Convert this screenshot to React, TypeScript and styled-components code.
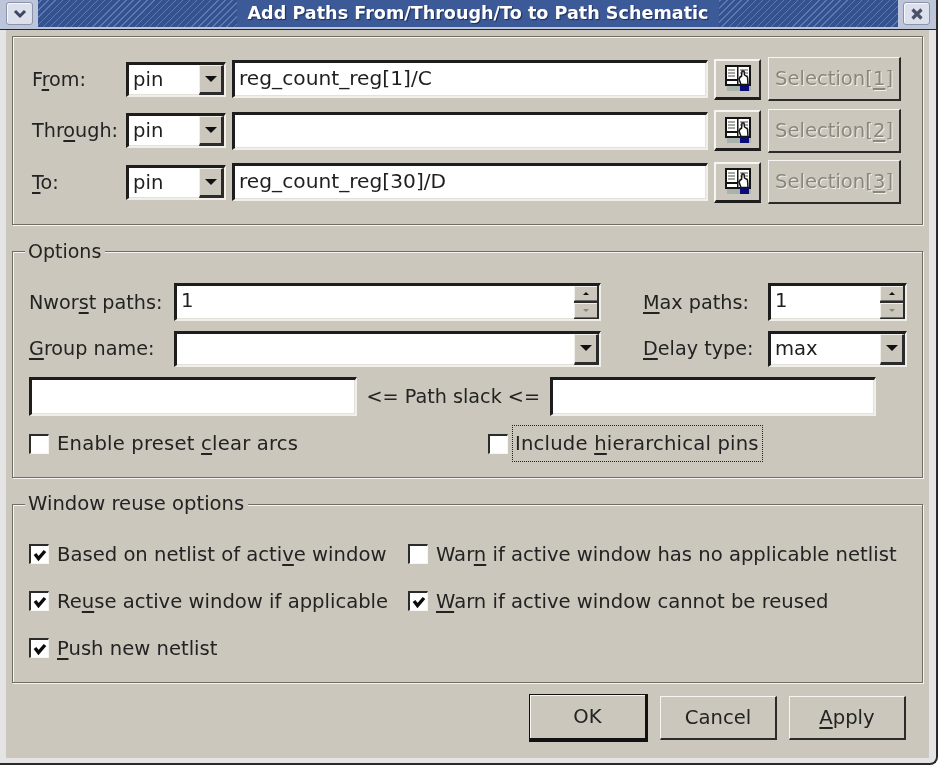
import React from 'react'
import styled, { createGlobalStyle } from 'styled-components'

const GlobalStyle = createGlobalStyle`
  html, body {
    margin: 0;
    background: #ffffff;
  }
  * {
    box-sizing: border-box;
  }
`

const Window = styled.div`
  width: 938px;
  height: 765px;
  display: flex;
  flex-direction: column;
  overflow: hidden;
  background: #e4e4e4;
  border-right: 2px solid #2a2a2a;
  border-bottom: 2px solid #2a2a2a;
  border-bottom-right-radius: 8px;
  font-family: 'DejaVu Sans', sans-serif;
  font-size: 19.6px;
  color: #232323;
  filter: blur(0.5px);
`

const TitleBar = styled.div`
  height: 30px;
  flex: none;
  display: flex;
  align-items: flex-start;
  background: #bcc5da;
  border-bottom: 1px solid #20242e;
  padding: 2px 6px 0;
`

const TitleStripes = styled.div`
  flex: 1;
  height: 27px;
  margin: -2px 5px 0;
  display: flex;
  align-items: center;
  justify-content: center;
  background: repeating-linear-gradient(135deg, #34528f 0 2px, #6079b0 2px 3px, #34528f 3px 5px);
`

const TitleText = styled.div`
  height: 27px;
  margin-left: 20px;
  padding: 0 10px;
  font-weight: 700;
  font-size: 17.6px;
  line-height: 27px;
  color: #ffffff;
  text-shadow: 1px 1px 1px #1c2c55;
  background: #3c5a98;
`

const WindowButton = styled.div`
  width: 27px;
  height: 23px;
  flex: none;
  display: flex;
  align-items: center;
  justify-content: center;
  background: #dbe0ec;
  border: 1px solid #8d94a8;
  border-radius: 3px;
  box-shadow: inset 1px 1px 0 #f6f7fb;
`

const Body = styled.div`
  flex: 1;
  margin: 0 7px 5px 6px;
  padding: 6px 6px 0;
  display: flex;
  flex-direction: column;
  gap: 26px;
  background: #cbc7bc;
`

const Group = styled.div<{ $height: number }>`
  position: relative;
  height: ${({ $height }) => $height}px;
  flex: none;
  border: 1px solid #6f6d66;
  box-shadow: inset 1px 1px 0 #f6f5f1, 1px 1px 0 #f6f5f1;
`

const Legend = styled.div<{ $size?: number }>`
  position: absolute;
  top: -14px;
  left: 12px;
  padding: 0 4px 0 3px;
  font-size: ${({ $size }) => $size ?? 19.6}px;
  line-height: 26px;
  background: #cbc7bc;
`

const PathsGrid = styled.div`
  display: grid;
  grid-template-columns: 94px 100px 482px 53px 140px;
  grid-auto-rows: 44px;
  row-gap: 7.5px;
  align-items: center;
  padding: 20px 0 0 19px;
`

const Label = styled.div`
  font-size: 19.2px;
  white-space: nowrap;
`

const Sunken = styled.div<{ $height: number; $width?: number }>`
  height: ${({ $height }) => $height}px;
  ${({ $width }) => ($width ? `width: ${$width}px; flex: none;` : '')}
  display: flex;
  align-items: stretch;
  background: #ffffff;
  border-style: solid;
  border-width: 3px 2px 2px 3px;
  border-color: #1d1d1d #f1efe9 #f1efe9 #1d1d1d;
  box-shadow: inset -1px -1px 0 #e4e1d9;
  overflow: hidden;
`

const FieldText = styled.div<{ $size?: number }>`
  flex: 1;
  min-width: 0;
  padding-left: 4px;
  font-size: ${({ $size }) => $size ?? 19.6}px;
  line-height: 30px;
  white-space: nowrap;
  color: #1f1f1f;
`

const ComboButton = styled.div`
  width: 25px;
  flex: none;
  display: flex;
  align-items: center;
  justify-content: center;
  background: #cbc7bc;
  border-style: solid;
  border-width: 1px 3px 3px 1px;
  border-color: #f1efe9 #2b2b2b #2b2b2b #f1efe9;
`

const Arrow = styled.div`
  width: 0;
  height: 0;
  border-left: 6px solid transparent;
  border-right: 6px solid transparent;
  border-top: 6px solid #111111;
`

const SpinColumn = styled.div`
  width: 25px;
  flex: none;
  display: flex;
  flex-direction: column;
  background: #2b2b2b;
  gap: 2px;
  padding-right: 2px;
  padding-bottom: 1px;
`

const SpinButton = styled.div`
  flex: 1;
  display: flex;
  align-items: center;
  justify-content: center;
  background: #cbc7bc;
  border-top: 1px solid #f1efe9;
  border-left: 1px solid #f1efe9;
  border-bottom: 1px solid #6f6d66;
`

const SpinArrow = styled.div<{ $down?: boolean }>`
  width: 0;
  height: 0;
  border-left: 3px solid transparent;
  border-right: 3px solid transparent;
  ${({ $down }) =>
    $down ? 'border-top: 3px solid #8a867d;' : 'border-bottom: 3px solid #111111;'}
`

const FieldSlot = styled.div`
  padding-left: 6px;
`

const ToolSlot = styled.div`
  padding-left: 6px;
`

const ToolButton = styled.div`
  width: 47px;
  height: 41px;
  display: flex;
  align-items: center;
  justify-content: center;
  background: #cbc7bc;
  border-style: solid;
  border-width: 2px 2px 3px 2px;
  border-color: #f6f5f1 #2b2b2b #1d1d1d #f6f5f1;
`

const SelectionSlot = styled.div`
  padding-left: 7px;
`

const PushButton = styled.div<{ $width: number; $height: number; $disabled?: boolean; $default?: boolean }>`
  width: ${({ $width }) => $width}px;
  height: ${({ $height }) => $height}px;
  display: flex;
  align-items: center;
  justify-content: center;
  white-space: nowrap;
  background: #cbc7bc;
  border-style: solid;
  border-width: ${({ $default }) => ($default ? '1px 3px 4px 1px' : '1px 2px 2px 1px')};
  border-color: ${({ $default }) =>
    $default ? '#111111' : '#f6f5f1 #2b2b2b #2b2b2b #f6f5f1'};
  box-shadow: ${({ $default }) => ($default ? 'inset 1px 1px 0 #f6f5f1' : 'none')};
  color: ${({ $disabled }) => ($disabled ? '#8a867d' : '#232323')};
  text-shadow: ${({ $disabled }) => ($disabled ? '1px 1px 0 #f1efe9' : 'none')};
`

const OptionsGrid = styled.div`
  display: grid;
  grid-template-columns: 145px 427px 42px 125px 139px;
  grid-auto-rows: 38px;
  row-gap: 8.5px;
  align-items: center;
  padding: 31px 0 0 16px;
`

const SlackRow = styled.div`
  display: flex;
  align-items: center;
  gap: 9.5px;
  height: 39px;
  margin: 9px 0 0 16px;
`

const PinsRow = styled.div`
  display: grid;
  grid-template-columns: 459px 1fr;
  align-items: center;
  height: 38px;
  margin: 9px 0 0 16px;
  letter-spacing: 0.2px;
`

const ReuseGrid = styled.div`
  display: grid;
  grid-template-columns: 379px 1fr;
  grid-auto-rows: 30px;
  row-gap: 17px;
  align-items: center;
  padding: 34px 0 0 16px;
`

const CheckRow = styled.div<{ $gap?: number }>`
  display: flex;
  align-items: center;
  gap: ${({ $gap }) => $gap ?? 8}px;
  white-space: nowrap;
`

const CheckBox = styled.div`
  width: 20px;
  height: 20px;
  flex: none;
  display: flex;
  align-items: center;
  justify-content: center;
  background: #ffffff;
  border-style: solid;
  border-width: 2px 1px 1px 2px;
  border-color: #2b2b2b #f6f5f1 #f6f5f1 #2b2b2b;
`

const FocusLabel = styled.div`
  height: 37px;
  display: flex;
  align-items: center;
  padding: 0 3px 0 2px;
  border: 1px dotted #232323;
`

const Key = styled.span`
  text-decoration: underline;
  text-decoration-thickness: 2px;
  text-underline-offset: 3px;
  text-decoration-skip-ink: none;
`

const Footer = styled.div`
  display: flex;
  justify-content: flex-end;
  align-items: center;
  gap: 12px;
  margin-top: -15px;
  padding-right: 17px;
`

const Check = ({ on }: { on?: boolean }) => (
  <CheckBox>
    {on && (
      <svg width="14" height="14" viewBox="0 0 14 14">
        <path d="M2 6 L5.5 10.5 L12 3" fill="none" stroke="#0c0c0c" strokeWidth="3.4" />
      </svg>
    )}
  </CheckBox>
)

const HandBookIcon = () => (
  <svg width="26" height="27" viewBox="0 0 26 27">
    <rect x="2" y="21" width="24" height="5" fill="#a9b3ae" />
    <rect x="1" y="1" width="24" height="19" fill="#ffffff" stroke="#141414" strokeWidth="2" />
    <rect x="12" y="1" width="1.5" height="19" fill="#141414" />
    <path d="M3 5h7M3 8h7M3 11h7M15 5h8M15 8h8M21 11h2" stroke="#8d8d85" strokeWidth="1.5" />
    <rect x="2" y="14" width="10" height="2" fill="#141414" />
    <rect x="15" y="19" width="9" height="7" fill="#0b0b78" />
    <path
      d="M14 14 L15.5 11.5 L16.5 11.5 L17 6 L19 6 L19.5 10 L22.5 12 L23 19.5 L16 19.5 Z"
      fill="#ffffff"
      stroke="#141414"
      strokeWidth="1.5"
      strokeLinejoin="round"
    />
  </svg>
)

const Combo = ({ value, height, width }: { value: string; height: number; width?: number }) => (
  <Sunken $height={height} $width={width}>
    <FieldText>{value}</FieldText>
    <ComboButton>
      <Arrow />
    </ComboButton>
  </Sunken>
)

const Spin = ({ value, height, width }: { value: string; height: number; width?: number }) => (
  <Sunken $height={height} $width={width}>
    <FieldText>{value}</FieldText>
    <SpinColumn>
      <SpinButton>
        <SpinArrow />
      </SpinButton>
      <SpinButton>
        <SpinArrow $down />
      </SpinButton>
    </SpinColumn>
  </Sunken>
)

const pathRows = [
  { label: <>F<Key>r</Key>om:</>, value: 'reg_count_reg[1]/C', key: '1' },
  { label: <>Thr<Key>o</Key>ugh:</>, value: '', key: '2' },
  { label: <><Key>T</Key>o:</>, value: 'reg_count_reg[30]/D', key: '3' },
]

const App = () => (
  <>
    <GlobalStyle />
    <Window>
      <TitleBar>
        <WindowButton>
          <svg width="14" height="10" viewBox="0 0 14 10">
            <path d="M2 2 L7 7 L12 2" fill="none" stroke="#3d4660" strokeWidth="3" />
          </svg>
        </WindowButton>
        <TitleStripes>
          <TitleText>Add Paths From/Through/To to Path Schematic</TitleText>
        </TitleStripes>
        <WindowButton>
          <svg width="14" height="14" viewBox="0 0 14 14">
            <path d="M2.5 2.5 L11.5 11.5 M11.5 2.5 L2.5 11.5" stroke="#4a5168" strokeWidth="3.2" />
          </svg>
        </WindowButton>
      </TitleBar>
      <Body>
        <Group $height={189}>
          <PathsGrid>
            {pathRows.map((row) => (
              <React.Fragment key={row.key}>
                <Label>{row.label}</Label>
                <Combo value="pin" height={35} />
                <FieldSlot>
                  <Sunken $height={38}>
                    <FieldText $size={20.2}>{row.value}</FieldText>
                  </Sunken>
                </FieldSlot>
                <ToolSlot>
                  <ToolButton>
                    <HandBookIcon />
                  </ToolButton>
                </ToolSlot>
                <SelectionSlot>
                  <PushButton $width={133} $height={44} $disabled>
                    <span>
                      Selection[<Key>{row.key}</Key>]
                    </span>
                  </PushButton>
                </SelectionSlot>
              </React.Fragment>
            ))}
          </PathsGrid>
        </Group>

        <Group $height={227}>
          <Legend $size={19}>Options</Legend>
          <OptionsGrid>
            <Label>
              Nwor<Key>s</Key>t paths:
            </Label>
            <Spin value="1" height={38} />
            <span />
            <Label>
              <Key>M</Key>ax paths:
            </Label>
            <Spin value="1" height={38} />
            <Label>
              <Key>G</Key>roup name:
            </Label>
            <Combo value="" height={36} />
            <span />
            <Label>
              <Key>D</Key>elay type:
            </Label>
            <Combo value="max" height={36} />
          </OptionsGrid>
          <SlackRow>
            <Sunken $height={39} $width={328} />
            <Label>&lt;= Path slack &lt;=</Label>
            <Sunken $height={39} $width={326} />
          </SlackRow>
          <PinsRow>
            <CheckRow>
              <Check />
              <span>
                Enable preset <Key>c</Key>lear arcs
              </span>
            </CheckRow>
            <CheckRow $gap={4}>
              <Check />
              <FocusLabel>
                <span>
                  Include <Key>h</Key>ierarchical pins
                </span>
              </FocusLabel>
            </CheckRow>
          </PinsRow>
        </Group>

        <Group $height={179}>
          <Legend>Window reuse options</Legend>
          <ReuseGrid>
            <CheckRow>
              <Check on />
              <span>
                Based on netlist of acti<Key>v</Key>e window
              </span>
            </CheckRow>
            <CheckRow>
              <Check />
              <span>
                War<Key>n</Key> if active window has no applicable netlist
              </span>
            </CheckRow>
            <CheckRow>
              <Check on />
              <span>
                Re<Key>u</Key>se active window if applicable
              </span>
            </CheckRow>
            <CheckRow>
              <Check on />
              <span>
                <Key>W</Key>arn if active window cannot be reused
              </span>
            </CheckRow>
            <CheckRow>
              <Check on />
              <span>
                <Key>P</Key>ush new netlist
              </span>
            </CheckRow>
          </ReuseGrid>
        </Group>

        <Footer>
          <PushButton $width={119} $height={48} $default>
            OK
          </PushButton>
          <PushButton $width={117} $height={44}>
            Cancel
          </PushButton>
          <PushButton $width={117} $height={44}>
            <span>
              <Key>A</Key>pply
            </span>
          </PushButton>
        </Footer>
      </Body>
    </Window>
  </>
)

export default App
